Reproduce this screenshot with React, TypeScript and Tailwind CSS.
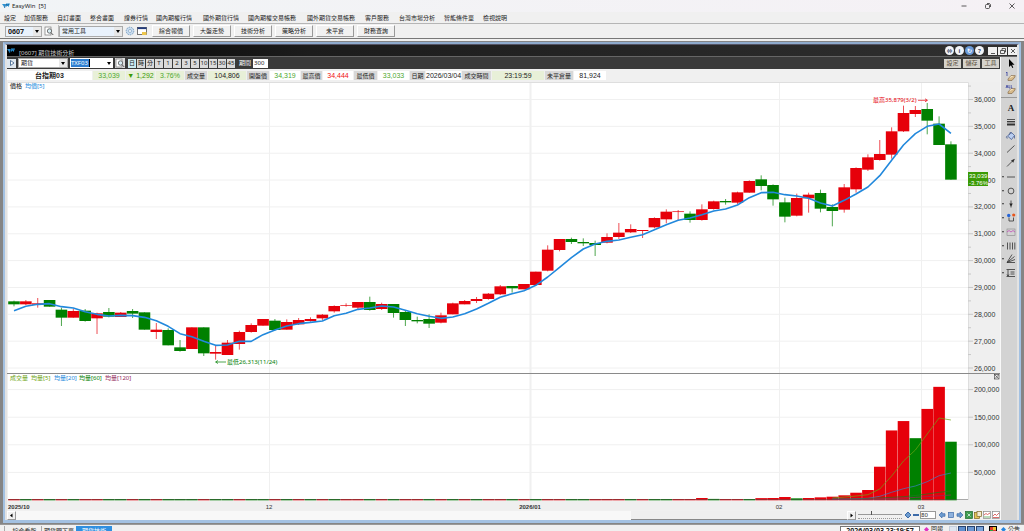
import type { ReactNode } from "react";

const menuItems = [
  "設定", "加值服務", "自訂畫面", "整合畫面", "證券行情", "國內期權行情", "國外期貨行情",
  "國內期權交易帳務", "國外期貨交易帳務", "客戶服務", "台灣市場分析", "智能條件單", "檢視說明",
];

const quickButtons = ["綜合報價", "大盤走勢", "技術分析", "策略分析", "未平倉", "財務查詢"];

const periods = ["日", "時", "分", "T", "1", "2", "3", "5", "10", "15", "30", "45"];

const RED = "#e6000a";
const GREEN = "#008000";

// [up, high, body top, body bottom, low], in thirds of a chart unit
const candles: [number, number, number, number, number][] = [
  [0, 662, 664, 673, 679], [1, 660, 664, 673, 675], [1, 654, 670, 674, 683], [0, 660, 660, 680, 680],
  [0, 683, 689, 713, 738], [1, 687, 693, 713, 713], [0, 687, 692, 723, 725], [1, 698, 700, 715, 762],
  [0, 684, 696, 710, 712], [1, 696, 698, 711, 711], [0, 687, 693, 701, 714], [0, 697, 697, 749, 749],
  [1, 729, 749, 756, 777], [0, 745, 750, 796, 796], [0, 780, 802, 813, 815], [1, 742, 742, 807, 807],
  [0, 742, 742, 820, 828], [1, 798, 816, 821, 839], [1, 780, 788, 825, 825], [1, 752, 756, 792, 809],
  [1, 730, 735, 756, 758], [1, 717, 717, 737, 737], [0, 717, 722, 750, 752], [1, 718, 726, 749, 749],
  [1, 714, 720, 733, 735], [1, 712, 717, 723, 725], [1, 702, 704, 715, 720], [1, 676, 678, 694, 698],
  [1, 670, 675, 677, 680], [1, 666, 666, 683, 687], [0, 650, 666, 690, 692], [1, 668, 672, 687, 690],
  [0, 672, 672, 699, 713], [0, 690, 696, 720, 738], [0, 710, 720, 724, 730], [0, 703, 717, 731, 744],
  [1, 698, 706, 728, 730], [1, 668, 670, 703, 703], [1, 660, 663, 673, 673], [1, 651, 657, 663, 669],
  [1, 639, 641, 657, 659], [1, 615, 619, 643, 645], [0, 618, 618, 625, 638], [1, 612, 612, 628, 628],
  [1, 575, 575, 615, 615], [1, 496, 509, 572, 574], [1, 477, 477, 510, 514], [0, 473, 477, 486, 492],
  [0, 475, 486, 490, 498], [0, 482, 489, 495, 528], [1, 460, 471, 488, 490], [1, 429, 458, 471, 477],
  [1, 433, 447, 457, 459], [1, 450, 450, 453, 474], [1, 412, 414, 442, 445], [1, 388, 395, 418, 430],
  [1, 390, 394, 396, 423], [0, 394, 401, 420, 428], [1, 373, 388, 420, 422], [1, 362, 364, 387, 389],
  [0, 357, 363, 367, 374], [1, 335, 337, 368, 372], [1, 301, 303, 338, 338], [0, 286, 298, 318, 331],
  [0, 313, 315, 358, 377], [0, 353, 367, 410, 427], [1, 341, 354, 407, 409], [1, 338, 344, 355, 398],
  [0, 329, 339, 386, 397], [0, 373, 381, 393, 439], [1, 312, 322, 389, 398], [1, 262, 264, 328, 338],
  [1, 223, 232, 269, 273], [1, 180, 222, 240, 242], [1, 142, 154, 224, 236], [1, 77, 99, 154, 156],
  [1, 78, 90, 102, 111], [0, 69, 87, 122, 163], [0, 109, 131, 195, 195], [0, 184, 193, 299, 299],
];

const average = [
  692, 679, 673, 671, 680, 684, 695, 703, 708, 706, 707, 712, 722, 739, 761, 770, 784, 796, 795, 784,
  784, 764, 750, 738, 731, 727, 723, 707, 700, 688, 684, 678, 681, 691, 701, 709, 715, 711, 701, 687,
  670, 652, 641, 632, 616, 591, 562, 533, 507, 492, 484, 480, 472, 464, 449, 434, 421, 414, 404, 393,
  387, 375, 353, 338, 337, 344, 348, 355, 369, 378, 361, 342, 321, 287, 241, 195, 161, 139, 132, 160,
];

const volumeColors =
  "rgrgrgrrggrgrgggrggrggrgrgrgrrgrgrrgrgrgrrgrgrrggrrrgrggrrrgrrgrrrgrrrrrrrrrgrrg";
const lateVolumes: Record<number, number> = {
  58: 3600, 59: 2000, 63: 3400, 64: 3600, 65: 5400, 66: 3000, 67: 3600, 68: 4800, 69: 6000,
  70: 8500, 71: 13200, 72: 18100, 73: 60300, 74: 126000, 75: 143000, 76: 112000, 77: 165000,
  78: 205000, 79: 105600,
};

const xOf = (i: number) => 7 + i * 11.86;
const yOf = (v: number) => v / 3 - 2;
const priceY = (p: number) => 17.5 + (36000 - p) * 0.02685;
const volumeY = (v: number) => 418 - v * 0.000552;
const line = (ys: number[], from = 0) => ys.map((y, i) => `${xOf(from + i)},${y}`).join(" ");

const thousands = Array.from({ length: 11 }, (_, i) => 36000 - i * 1000);
const halves = Array.from({ length: 11 }, (_, i) => 36500 - i * 1000);
const volumeTicks = [200000, 150000, 100000, 50000];
const months = [
  { x: 262, label: "12" },
  { x: 523, label: "2026/01", bold: true },
  { x: 772, label: "02" },
  { x: 914, label: "03" },
];

function Chart() {
  return (
    <svg viewBox="0 0 993 428" className="block h-auto w-full" role="img" aria-label="台指期03 日線">
      <rect width="993" height="428" fill="#efefef" />
      <rect x="1" y="0" width="960" height="418" fill="#fff" />
      <path d="M1 .5H961.5V418" fill="none" stroke="#dedede" />
      <g stroke="#f0f0f0">
        {thousands.map((p) => (
          <path key={p} d={`M1 ${priceY(p)}H961`} />
        ))}
        {volumeTicks.map((v) => (
          <path key={v} d={`M1 ${volumeY(v)}H961`} />
        ))}
        {months.map((m) => (
          <path key={m.label} d={`M${m.x + 0.5} 1V418`} strokeWidth={m.bold ? 2 : 1} />
        ))}
      </g>
      <g stroke="#c8c8c8">
        {thousands.map((p) => (
          <path key={p} d={`M961 ${priceY(p)}h5`} />
        ))}
        {halves.map((p) => (
          <path key={p} d={`M961 ${priceY(p)}h3`} />
        ))}
        {volumeTicks.map((v) => (
          <path key={v} d={`M961 ${volumeY(v)}h5`} />
        ))}
      </g>

      {candles.map(([up, high, top, bottom, low], i) => {
        const color = up ? RED : GREEN;
        return (
          <g key={i}>
            <path d={`M${xOf(i)} ${yOf(high)}V${yOf(low)}`} stroke={color} strokeWidth=".7" />
            <rect
              x={xOf(i) - 5.8}
              y={yOf(top)}
              width="11.6"
              height={Math.max((bottom - top) / 3, 0.7)}
              fill={color}
            />
          </g>
        );
      })}
      <polyline points={line(average.map(yOf))} fill="none" stroke="#2188dc" strokeWidth="1.6" strokeLinejoin="round" />

      <g fill={RED} stroke={RED}>
        <text x="866" y="20" stroke="none" className="text-[6px]">最高35,879(3/2)</text>
        <path d="M911 18.3h9M918 16.8l2.5 1.5-2.5 1.5" fill="none" strokeWidth=".7" />
      </g>
      <g fill={GREEN} stroke={GREEN}>
        <text x="220" y="282" stroke="none" className="text-[6px]">最低26,313(11/24)</text>
        <path d="M219 280h-10M211 278.5l-2.5 1.5 2.5 1.5" fill="none" strokeWidth=".7" />
      </g>

      {[...volumeColors].map((c, i) => {
        const y = volumeY(lateVolumes[i] ?? 1800);
        return (
          <rect key={i} x={xOf(i) - 5.8} y={y} width="11.6" height={418.3 - y} fill={c === "r" ? RED : GREEN} />
        );
      })}
      <path d="M1 417.5H961" stroke="#555" strokeWidth=".5" />
      <g fill="none" strokeWidth=".7">
        <polyline points={line([416, 415, 414, 412.7, 407, 394, 379, 368, 352, 336, 338], 69)} stroke="#6ea414" />
        <polyline points={line([417, 417, 416.7, 416.3, 414.3, 410.3, 406.7, 404, 399.7, 393.7, 391], 69)} stroke="#3f7fc8" />
        <polyline points={line([417, 417, 417, 416.5, 416, 415.3, 414.7, 413.5, 412, 410.3, 409], 69)} stroke="#1c7a1c" />
        <polyline points={line([417.5, 417.5, 417.3, 417, 416.8, 416.5, 416, 415.4, 414.6, 413.8, 413], 69)} stroke="#93295c" />
      </g>
      <path d="M0 291.5H993" stroke="#8a8a8a" />

      <text x="3" y="6" className="text-[6px]">
        價格 <tspan x="18" fill="#2188dc">均價[5]</tspan>
      </text>
      <text x="3" y="298" className="text-[6px]" fill="#6ea414">
        成交量 <tspan x="24">均量[5]</tspan> <tspan x="47" fill="#2188dc">均量[20]</tspan>{" "}
        <tspan x="72" fill={GREEN}>均量[60]</tspan> <tspan x="98" fill="#93295c">均量[120]</tspan>
      </text>
      <g stroke="#333" strokeWidth=".6" fill="none">
        <rect x="987.5" y="292.5" width="4.5" height="4.5" />
        <path d="M988 293l3.5 3.5M991.5 293l-3.5 3.5" />
      </g>

      <g className="font-['Liberation_Sans',sans-serif] text-[7px]" fill="#333">
        {thousands.map((p) => (
          <text key={p} x="967" y={priceY(p) + 2.5}>{p.toLocaleString("en-US")}</text>
        ))}
        {volumeTicks.map((v) => (
          <text key={v} x="967" y={volumeY(v) + 2.5}>{v.toLocaleString("en-US")}</text>
        ))}
        <text x="1" y="427" className="text-[6px]" fontWeight="bold">2025/10</text>
        {months.map((m) => (
          <text key={m.label} x={m.x} y="427" textAnchor="middle" className="text-[6px]" fontWeight={m.bold ? "bold" : "normal"}>
            {m.label}
          </text>
        ))}
      </g>
      <rect x="961" y="90" width="20" height="14" fill="#3b9a05" />
      <g className="font-['Liberation_Sans',sans-serif] text-[6px]" fill="#fff">
        <text x="962" y="96">33,039</text>
        <text x="962" y="103">-3.76%</text>
      </g>
    </svg>
  );
}

function Logo() {
  return (
    <svg viewBox="0 0 8 6" className="h-[6px] w-2 shrink-0">
      <path d="M0 1h3.5L2.5 5 1.500 3zM4 .5h4L6.500 4 5.500 2.500 4 4z" fill="#2b93d4" />
      <path d="M2.5 5L4 1l1 1.500L7 1" fill="none" stroke="#0b5b9a" strokeWidth=".7" />
    </svg>
  );
}

function PageSearch() {
  return (
    <svg viewBox="0 0 10 10" className="size-[10px] shrink-0">
      <rect x="1" y="1" width="6" height="8" fill="#fff" stroke="#777" strokeWidth=".7" />
      <circle cx="5.5" cy="5" r="2.2" fill="#d8ecf2" stroke="#555" strokeWidth=".8" />
      <path d="M7 6.700L9.300 9" stroke="#555" />
    </svg>
  );
}

function Select({ label, value, className, bg }: { label: string; value: string; className: string; bg: string }) {
  return (
    <div className={`relative border border-[#aaa] ${bg} ${className}`}>
      <select aria-label={label} className="block h-full w-full appearance-none pl-0.5 leading-none outline-none">
        <option>{value}</option>
      </select>
      <span className="pointer-events-none absolute inset-y-0 right-0 flex w-2 items-center justify-center bg-[#e8e8e8]">
        <svg viewBox="0 0 4 3" className="h-[3px] w-1">
          <path d="M0 0h4L2 3z" />
        </svg>
      </span>
    </div>
  );
}

const quote: { text: string; style: string; label?: boolean }[] = [
  { text: "台指期03", style: "bg-white font-bold" },
  { text: "33,039", style: "bg-[#e8f0d8] text-[#4ea72e]" },
  { text: "▼ 1,292", style: "bg-[#e8f0d8] text-[#3b9a05]" },
  { text: "3.76%", style: "bg-[#e8f0d8] text-[#4ea72e]" },
  { text: "成交量", style: "bg-[#d8d8d8]", label: true },
  { text: "104,806", style: "bg-[#e8f0d8]" },
  { text: "開盤價", style: "bg-[#d8d8d8]", label: true },
  { text: "34,319", style: "bg-white text-[#4ea72e]" },
  { text: "最高價", style: "bg-[#d8d8d8]", label: true },
  { text: "34,444", style: "bg-white text-[#f01010]" },
  { text: "最低價", style: "bg-[#d8d8d8]", label: true },
  { text: "33,033", style: "bg-white text-[#4ea72e]" },
  { text: "日期", style: "bg-[#d8d8d8]", label: true },
  { text: "2026/03/04", style: "bg-white" },
  { text: "成交時間", style: "bg-[#d8d8d8]", label: true },
  { text: "23:19:59", style: "bg-[#e8f0d8]" },
  { text: "未平倉量", style: "bg-[#d8d8d8]", label: true },
  { text: "81,924", style: "bg-white" },
];

const eraser = (
  <>
    <path d="M3 8l3-3.500h4L7.500 8z" fill="#f5e3c0" stroke="#7a6040" strokeWidth=".6" />
    <path d="M3 8v1.500h4L10 6V4.500" fill="#d6b98a" stroke="#7a6040" strokeWidth=".6" />
  </>
);

const topTools: { name: string; art: ReactNode }[] = [
  { name: "選取", art: <path d="M4 1v8l2-1.800L7.300 10l1-.5L7 6.800h2.500z" fill="#000" stroke="none" /> },
  { name: "清除一個", art: <>{eraser}<path d="M1 2l1-1v4" stroke="#3540a0" /></> },
  { name: "清除全部", art: <>{eraser}<path d="M1 4l1-3 1 3M1.300 3h1.400M4 1v3h1.200M6.200 1v3h1.200" stroke="#3540a0" strokeWidth=".7" /></> },
];

const drawTools: { name: string; menu?: boolean; art: ReactNode }[] = [
  { name: "文字", art: <text x="6" y="9" textAnchor="middle" fontSize="9" fontFamily="Liberation Serif, serif" fontWeight="bold" fill="#222" stroke="none">A</text> },
  { name: "線寬", art: <><path d="M2 3.500h8" /><path d="M2 5.700h8" strokeWidth="1.300" /><path d="M2 8.500h8" strokeWidth="2" /></> },
  { name: "填色", art: <><path d="M2.500 6l4-3.500 3 3L6.500 9.500z" fill="#b9cdf0" stroke="#4a5f90" /><path d="M4 5l1.500-3 1 1.500M2 6c-1.500 1.500 0 3 1 1.500M9.500 5.500v3" stroke="#4a5f90" /></> },
  { name: "線段", art: <path d="M2 9.500l7.500-7" /> },
  { name: "箭頭", art: <><path d="M2 9.500l7-7" /><path d="M9.800 1.800L6 3.500l2.300 2.300z" fill="#333" stroke="none" /></> },
  { name: "水平線", menu: true, art: <path d="M2 6h8" /> },
  { name: "圓形", menu: true, art: <circle cx="6" cy="6" r="2.900" /> },
  { name: "標記", menu: true, art: <><path d="M6 2.500v7" /><path d="M4.200 5.500h3.600L6 8.500z" fill="#222" stroke="none" /></> },
  { name: "磁鐵", menu: true, art: <><path d="M4 5.500V9h4.500V5.500" /><circle cx="3.700" cy="3.500" r="1.700" fill="#2464d8" stroke="none" /><circle cx="8.700" cy="3" r="1.600" fill="#e8561c" stroke="none" /></> },
  { name: "波浪", menu: true, art: <><rect x="2" y="3" width="8" height="6.500" stroke="#888" strokeWidth=".6" /><path d="M2 6l2-1.500 2 1.500 2-1.500 2 1.500" stroke="#c03cb4" strokeWidth=".7" /></> },
  { name: "週期線", menu: true, art: <path d="M2.500 2.500v7M5 2.500v7M7.500 2.500v7M9.800 2.500v7" /> },
  { name: "扇形", menu: true, art: <path d="M2 9.500l5-8M2 9.500l7.500-6M2 9.500l8-3M2 9.500h8" /> },
  { name: "黃金分割", menu: true, art: <path d="M1.500 2.500h8.500M1.500 9.500h8.500M5.500 5h4M5.500 7h4M3 3v6M2 7.500l1 1.500 1-1.500" /> },
];

function Tool({ name, menu, art }: { name: string; menu?: boolean; art: ReactNode }) {
  return (
    <button aria-label={name} className="flex h-3 w-full items-center">
      <svg viewBox="0 0 3 2" className="mx-px h-[2px] w-[3px]">
        {menu && <path d="M0 0h3L1.500 2z" />}
      </svg>
      <svg viewBox="0 0 12 12" className="size-3 shrink-0" fill="none" stroke="#333" strokeWidth=".8">
        {art}
      </svg>
    </button>
  );
}

const footIcons: { name: string; art: ReactNode }[] = [
  { name: "往左", art: <path d="M1 4l3-3v1.700h3v2.600H4V7z" fill="#6d9cd0" stroke="#3d6ba8" /> },
  { name: "停止", art: <rect x="1.500" y="1.500" width="5" height="5" fill="#8fb2dd" stroke="#3d6ba8" /> },
  { name: "往右", art: <path d="M7 4L4 1v1.700H1v2.600h3V7z" fill="#6d9cd0" stroke="#3d6ba8" /> },
  { name: "匯出試算表", art: <><rect x=".5" y=".5" width="7" height="7" fill="#3c9a4c" stroke="#20682c" /><path d="M2.500 2.500l3 3M5.500 2.500l-3 3" stroke="#fff" /></> },
  { name: "複製", art: <><rect x=".5" y="1.500" width="5" height="6" fill="#e6c65a" stroke="#7c6420" /><rect x="3" y=".5" width="4.500" height="5" fill="#f4ead0" stroke="#7c6420" /></> },
  { name: "走勢一", art: <><rect x=".5" y=".5" width="7" height="7" fill="#fff" stroke="#888" /><path d="M1 4l2-1.500 1.500 1L7 2" stroke="#d02c2c" /><path d="M1 6h6" stroke="#3a9a3a" /></> },
  { name: "走勢二", art: <><rect x=".5" y=".5" width="7" height="7" fill="#fff" stroke="#888" /><path d="M1 5l2-2 1.500 1.500L7 2M1 6.500h6" stroke="#d02c2c" /></> },
];

const statusIcons = [
  "border-[#c4cedc] bg-[#dde5f0]",
  "border-[#26426e] bg-[#5f8fce]",
  "border-[#26426e] bg-[#6b98d2]",
  "border-[#26426e] bg-[#7aa4da]",
];
const bevel = "border border-t-white border-l-white border-r-[#999] border-b-[#999] bg-[#f1f1f1]";

export default function App() {
  return (
    <div className="flex h-screen flex-col overflow-hidden bg-[#f0f0f0] font-['Noto_Sans','Noto_Sans_CJK_TC',sans-serif] text-[6px] leading-none text-[#222]">
      <header className="flex h-3 shrink-0 items-center gap-1 bg-[linear-gradient(90deg,#f1f4f6,#f5f1f5)] pr-2">
        <div className="flex items-center gap-0.5 pl-0.5">
          <Logo />
          <h1 className="whitespace-pre">EasyWin  [5]</h1>
        </div>
        <div className="ml-auto flex gap-4">
          <button aria-label="最小化">
            <svg viewBox="0 0 8 8" className="size-2"><path d="M1.500 4h5" stroke="#333" strokeWidth=".8" /></svg>
          </button>
          <button aria-label="還原">
            <svg viewBox="0 0 8 8" className="size-2" fill="none" stroke="#333" strokeWidth=".8">
              <rect x="1.500" y="2.500" width="4" height="4" rx="1" />
              <path d="M3 1.500h2.500l1 1V5" />
            </svg>
          </button>
          <button aria-label="關閉">
            <svg viewBox="0 0 8 8" className="size-2"><path d="M1.500 1.500l5 5M6.500 1.500l-5 5" stroke="#333" strokeWidth=".8" /></svg>
          </button>
        </div>
      </header>

      <nav className="grid h-3 shrink-0 grid-cols-[20px_33px_33px_34px_32px_47px_45px_59px_58px_34px_45px_39px_30px] items-center border-b border-[#b5b5b5] pl-1">
        {menuItems.map((item) => (
          <button key={item} className="whitespace-nowrap text-left">{item}</button>
        ))}
      </nav>

      <div className="flex h-[15px] shrink-0 items-center border-b border-[#777] pl-[5px]">
        <Select label="代號" value="0607" bg="bg-[#e9f2fc]" className="h-[11px] w-[37px] text-[7px] font-bold" />
        <button aria-label="搜尋" className="ml-0.5"><PageSearch /></button>
        <div className="ml-1 h-3 border-l border-[#bbb]" />
        <Select label="工具列" value="常用工具" bg="bg-[#e9f2fc]" className="h-[11px] w-[64px]" />
        <button aria-label="設定" className="ml-0.5">
          <svg viewBox="0 0 10 10" className="size-[10px]">
            <circle cx="5" cy="5" r="3.800" fill="#c9dcee" stroke="#7ba0c4" strokeDasharray="1.500 .8" />
            <circle cx="5" cy="5" r="1.500" fill="#fff" stroke="#7ba0c4" strokeWidth=".7" />
          </svg>
        </button>
        <button aria-label="視窗" className="ml-0.5">
          <svg viewBox="0 0 10 10" className="size-[10px]">
            <rect x=".5" y="1.500" width="9" height="7" fill="#fff" stroke="#555" strokeWidth=".8" />
            <path d="M.5 2.200h9" stroke="#223a7c" strokeWidth="1.800" />
            <path d="M5 6h4.500v3H5z" fill="#edc64c" />
          </svg>
        </button>
        <div className="ml-[5px] flex gap-[3px]">
          {quickButtons.map((label) => (
            <button key={label} className={`h-3 w-[38px] ${bevel}`}>{label}</button>
          ))}
        </div>
      </div>

      <main className="mt-[2px] flex shrink-0 flex-col border-x-[3px] border-t border-b border-[#858585]">
        <section className="flex flex-col border-x-2 border-t-2 border-b-3 border-[#a3c1e2] border-t-[#8fabcd]">
          <div className="border-x-2 border-[#e3e3e3] border-t border-t-[#556]">
            <div className="flex h-3 items-center border-b border-[#666] bg-[linear-gradient(90deg,#000,#1c1c1c_30%,#303030)] text-[#c8c8c8]">
              <div className="flex items-center gap-1">
                <Logo />
                <h2 className="pt-1">[0607] 期貨技術分析</h2>
              </div>
              <div className="ml-auto flex gap-px">
                {["⇔", "i", "↻", "?"].map((mark) => (
                  <button
                    key={mark}
                    className={`size-[9px] rounded-full text-[6px] font-bold ${mark === "↻" ? "bg-[#6b9ad8] text-white" : "bg-[#f2f4f8] text-[#33415c]"}`}
                  >
                    {mark}
                  </button>
                ))}
              </div>
              <div className="ml-1 flex gap-px">
                {["M2 6.500h4", "M1.500 3.500h4v3h-4zM3 3.500v-2h3.500v3.500h-1", "M2 2l4 4M6 2l-4 4"].map((d, i) => (
                  <button key={d} aria-label={["縮小", "還原視窗", "關閉視窗"][i]} className="h-2 w-[9px] bg-[#f0f0f0]">
                    <svg viewBox="0 0 8 8" className="mx-auto size-2" fill="none" stroke="#333" strokeWidth=".8"><path d={d} /></svg>
                  </button>
                ))}
              </div>
            </div>

            <div className="flex">
              <div className="flex min-w-0 flex-1 flex-col">
                <div className="flex h-3 items-center bg-[#3a3a3a]">
                  <button aria-label="展開" className="h-[9px] w-[9px] bg-[#dfe7ef]">
                    <svg viewBox="0 0 8 8" className="mx-auto size-2"><path d="M2.500 1.500L6 4 2.500 6.500z" fill="#fff" stroke="#345b86" strokeWidth=".8" /></svg>
                  </button>
                  <Select label="商品類別" value="期貨" bg="bg-white" className="ml-0.5 h-[10px] w-[50px]" />
                  <div className="ml-0.5 flex h-[10px] w-[43px] items-center bg-white pl-px">
                    <input aria-label="商品代號" defaultValue="TXF03" className="h-2 w-[18px] bg-[#2f7fd0] text-white outline-none" />
                    <span className="h-2 w-px bg-black" />
                    <svg viewBox="0 0 4 3" className="mr-0.5 ml-auto h-[3px] w-1"><path d="M0 0h4L2 3z" /></svg>
                  </div>
                  <button aria-label="搜尋商品" className="ml-0.5 bg-[#ddd]"><PageSearch /></button>
                  <div className="ml-[3px] flex gap-px">
                    {periods.map((p) => (
                      <button key={p} className={`flex h-[9px] w-2 items-center justify-center ${p === "日" ? "bg-[#cdeaf0]" : "bg-[#dadada]"}`}>
                        {p}
                      </button>
                    ))}
                  </div>
                  <label htmlFor="span" className="ml-1 text-white">期間</label>
                  <input id="span" defaultValue="300" className="ml-0.5 h-[9px] w-[15px] bg-white pl-px outline-none" />
                  <div className="mr-px ml-auto flex gap-0.5">
                    {["設定", "儲存", "工具"].map((label) => (
                      <button key={label} className="h-[9px] w-[17px] bg-[#d6d3cc] text-[#5a5040]">{label}</button>
                    ))}
                  </div>
                </div>

                <dl className="grid h-[13px] grid-cols-[85px_32px_29px_28px_22px_38px_22px_30px_21px_30px_23px_31px_15px_35px_29px_52px_28px_32px] items-center gap-px font-['Liberation_Sans','Noto_Sans_CJK_TC',sans-serif]">
                  {quote.map(({ text, style, label }) => {
                    const Cell = label ? "dt" : "dd";
                    return (
                      <Cell
                        key={text}
                        className={`flex h-[9px] items-center justify-center whitespace-nowrap ${label ? "text-[6px]" : "text-[7px]"} ${style}`}
                      >
                        {text}
                      </Cell>
                    );
                  })}
                </dl>

                <Chart />

                <div className="flex h-[10px] items-center">
                  <button aria-label="向左捲動" className={`size-[9px] ${bevel}`}>
                    <svg viewBox="0 0 7 7" className="size-[7px]"><path d="M4.500 1.500v4L2 3.500z" /></svg>
                  </button>
                  <div className="flex h-[9px] flex-1 bg-[#f8f8f8]">
                    <div className="ml-auto w-[216px] border-b border-[#888] bg-[#efefef]" />
                  </div>
                  <button aria-label="向右捲動" className={`size-[9px] ${bevel}`}>
                    <svg viewBox="0 0 7 7" className="size-[7px]"><path d="M2.500 1.500v4L5 3.500z" /></svg>
                  </button>
                  <div className="relative ml-0.5 h-2 w-[44px]">
                    <input
                      type="range"
                      aria-label="縮放"
                      defaultValue="30"
                      className="absolute inset-x-0 top-0 h-1 w-full appearance-none border-b border-[#999] bg-transparent [&::-webkit-slider-thumb]:h-1 [&::-webkit-slider-thumb]:w-px [&::-webkit-slider-thumb]:appearance-none [&::-webkit-slider-thumb]:bg-[#555]"
                    />
                    <div className="absolute inset-x-0 bottom-0 border-b border-dotted border-[#999]" />
                  </div>
                  <button aria-label="放大" className="ml-0.5">
                    <svg viewBox="0 0 8 8" className="size-2"><path d="M1 4l3-3 3 3-3 3z" fill="#6d9cd0" stroke="#3d6ba8" /></svg>
                  </button>
                  <button aria-label="縮小間距">
                    <svg viewBox="0 0 8 8" className="size-2"><path d="M1 4h6" stroke="#3d6ba8" strokeWidth="2" /></svg>
                  </button>
                  <input aria-label="K棒數" defaultValue="80" className="h-2 w-4 border border-[#999] bg-white outline-none" />
                  <div className="ml-0.5 flex gap-px">
                    {footIcons.map(({ name, art }) => (
                      <button key={name} aria-label={name}>
                        <svg viewBox="0 0 8 8" className="size-2" fill="none" strokeWidth=".7">{art}</svg>
                      </button>
                    ))}
                  </div>
                </div>
              </div>

              <aside className="flex w-[17px] shrink-0 flex-col border-l border-[#f8f8f8] bg-[#d3d3d3]">
                <div className="flex flex-col gap-px border-b border-[#999] pt-px pb-px">
                  {topTools.map((tool) => <Tool key={tool.name} {...tool} />)}
                </div>
                <div className="mt-1 flex h-[177px] flex-col justify-between">
                  {drawTools.map((tool) => <Tool key={tool.name} {...tool} />)}
                </div>
              </aside>
            </div>
          </div>
        </section>
      </main>

      <footer className="flex shrink-0 items-start border-t border-[#999] pt-px">
        <div className="flex pl-1">
          <span className="h-2 w-1 border-l border-[#aaa]" />
          <button className="h-[9px] w-[33px]">綜合看盤</button>
          <button className="h-[9px] w-[35px] border-l border-[#aaa]">期貨閃下單</button>
          <button className="h-[9px] w-9 bg-[#2f8fe0] text-white">期貨技術</button>
        </div>
        <time className="ml-auto h-3 w-[80px] border border-[#777] bg-white text-center text-[7px] font-bold">
          2026/03/03 23:19:57
        </time>
        <a href="#report" className="ml-1 flex items-center gap-0.5">
          <svg viewBox="0 0 5 5" className="size-[5px]"><path d="M2.500 0L5 2.500 2.500 5 0 2.500z" fill="#e030c0" /></svg>
          回報
        </a>
        <div className="ml-[6px] flex gap-px">
          {statusIcons.map((color) => <span key={color} className={`h-2 w-2 border ${color}`} />)}
          <span className="ml-1 grid h-2 w-2 grid-cols-2 border border-black">
            <i className="bg-[#e03a2c]" /><i className="bg-[#f0c030]" />
            <i className="bg-[#32a040]" /><i className="bg-[#e03a2c]" />
          </span>
        </div>
        <a href="#news" className="mr-1 ml-1 flex items-center gap-0.5">
          <svg viewBox="0 0 5 5" className="size-[5px]"><path d="M2.500 0L5 2.500 2.500 5 0 2.500z" fill="#2484e0" /></svg>
          公告
        </a>
      </footer>
    </div>
  );
}
